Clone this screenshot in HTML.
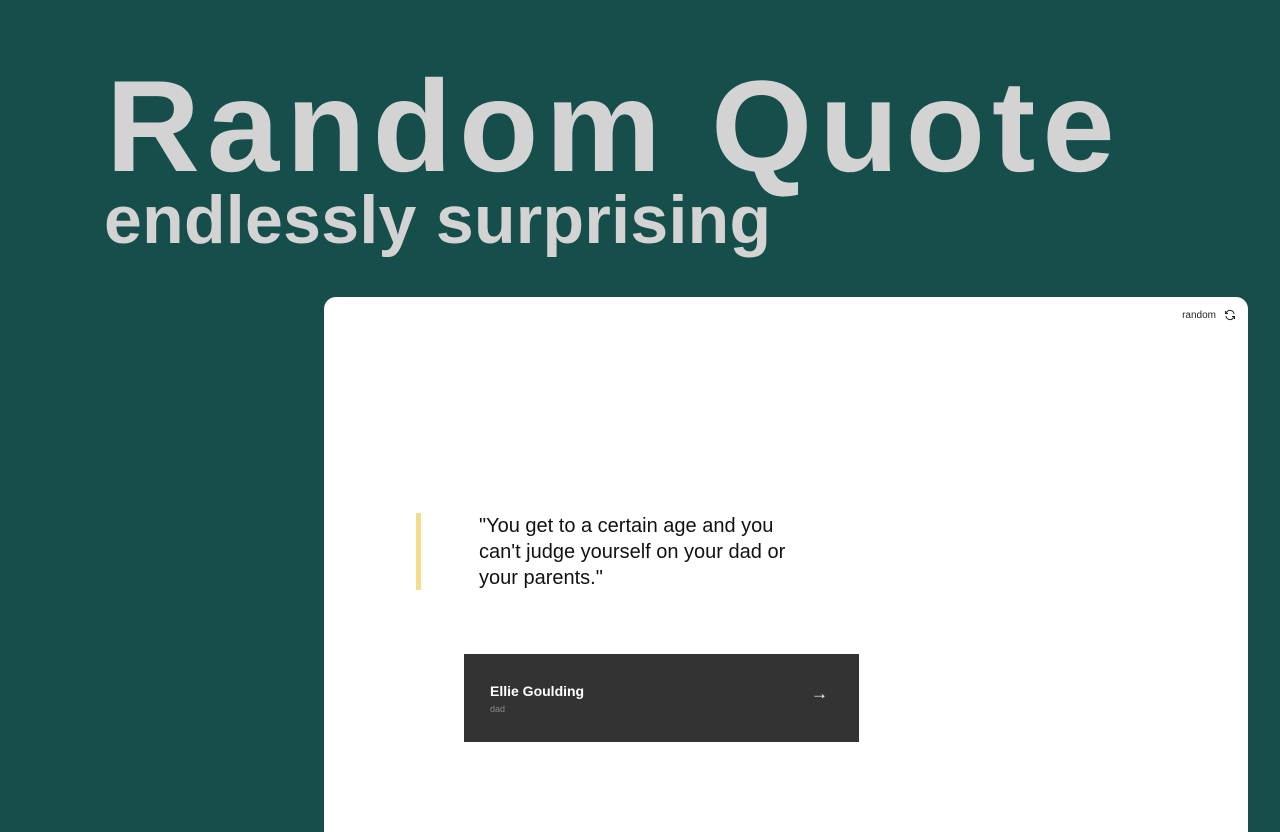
<!DOCTYPE html>
<html><head><meta charset="utf-8"><style>
html,body{margin:0;padding:0;width:1280px;height:832px;overflow:hidden}
body{background:#154e4a;position:relative;font-family:"Liberation Sans",sans-serif}
.t1{position:absolute;left:106px;top:56px;font-size:130px;letter-spacing:7px;font-weight:bold;color:#d3d3d3;line-height:140px;white-space:nowrap}
.t2{position:absolute;left:104px;top:180px;font-size:68px;letter-spacing:0.3px;font-weight:bold;color:#d3d3d3;line-height:80px;white-space:nowrap}
.card{position:absolute;left:324px;top:297px;width:924px;height:535px;background:#fff;border-radius:12px 12px 0 0}
.rnd{position:absolute;right:32px;top:13px;font-size:10px;color:#222}
.ic{position:absolute;right:12px;top:12px}
.bar{position:absolute;left:92px;top:216px;width:5px;height:77px;background:#f2dd8e}
.q{position:absolute;left:155px;top:216px;width:330px;font-size:20px;line-height:26px;color:#111}
.auth{position:absolute;left:140px;top:357px;width:395px;height:88px;background:#333}
.name{position:absolute;left:26px;top:29px;color:#fff;font-weight:bold;font-size:14px}
.sub{position:absolute;left:26px;top:50px;color:#888;font-size:9px}
.arr{position:absolute;right:31px;top:30px;color:#fff;font-size:17px}
</style></head><body>
<div class="t1">Random Quote</div>
<div class="t2">endlessly surprising</div>
<div class="card">
<div class="rnd">random</div>
<svg class="ic" width="12" height="12" viewBox="0 0 24 24" fill="none" stroke="#222" stroke-width="2"><path d="M20 10A8 8 0 0 0 5 7L3 9M3 4v5h5M4 14a8 8 0 0 0 15 3l2-2M21 20v-5h-5"/></svg>
<div class="bar"></div>
<div class="q">"You get to a certain age and you can't judge yourself on your dad or your parents."</div>
<div class="auth"><div class="name">Ellie Goulding</div><div class="sub">dad</div><div class="arr">→</div></div>
</div>
</body></html>
